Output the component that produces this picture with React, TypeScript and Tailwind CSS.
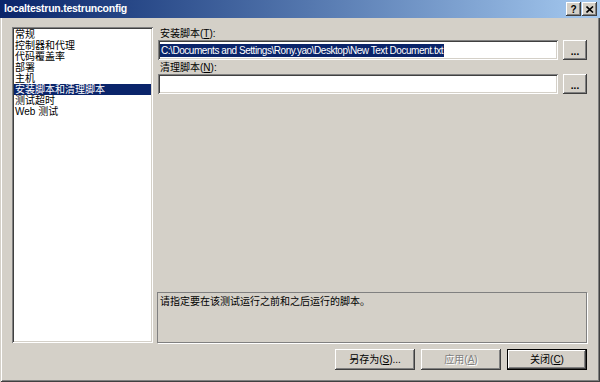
const items = [
  '常规',
  '控制器和代理',
  '代码覆盖率',
  '部署',
  '主机',
  '安装脚本和清理脚本',
  '测试超时',
  'Web 测试',
];

const raised =
  'shadow-[inset_-1px_-1px_0_#404040,inset_1px_1px_0_#ffffff,inset_-2px_-2px_0_#808080,inset_2px_2px_0_#d4d0c8]';
const sunken =
  'shadow-[inset_1px_1px_0_#808080,inset_-1px_-1px_0_#ffffff,inset_2px_2px_0_#404040,inset_-2px_-2px_0_#d4d0c8]';

const Btn = ({
  children,
  disabled,
  primary,
}: {
  children: React.ReactNode;
  disabled?: boolean;
  primary?: boolean;
}) => (
  <div
    className={`flex h-[21px] w-[80px] items-center justify-center bg-[#d4d0c8] text-[10px] leading-none ${
      primary
        ? 'shadow-[inset_0_0_0_1px_#000000,inset_-2px_-2px_0_#404040,inset_2px_2px_0_#ffffff,inset_-3px_-3px_0_#808080]'
        : raised
    } ${disabled ? 'text-[#808080] [text-shadow:1px_1px_0_#ffffff]' : 'text-black'}`}
  >
    {children}
  </div>
);

const App = () => {
  return (
    <div className="flex h-[382px] w-[600px] flex-col overflow-hidden bg-[#d4d0c8] font-['Liberation_Sans','Noto_Sans_CJK_SC',sans-serif] text-[10px] text-black shadow-[inset_1px_0_0_#d4d0c8,inset_-1px_-1px_0_#404040,inset_2px_0_0_#ffffff,inset_-2px_-2px_0_#808080]">
      {/* title bar */}
      <div className="flex h-[18px] items-center bg-gradient-to-r from-[#0a246a] to-[#a6caf0] pl-[4px] pr-[3px]">
        <span className="flex-1 text-[10.5px] font-bold tracking-[-0.25px] text-white">
          localtestrun.testrunconfig
        </span>
        <div className="flex gap-[1px]">
          <div className={`flex h-[14px] w-[15px] items-center justify-center bg-[#d4d0c8] text-[10px] font-bold ${raised}`}>
            ?
          </div>
          <div className={`flex h-[14px] w-[15px] items-center justify-center bg-[#d4d0c8] ${raised}`}>
            <svg width="8" height="7" viewBox="0 0 8 7">
              <path d="M0.5 0.5 L7 6.5 M7 0.5 L0.5 6.5" stroke="#000" strokeWidth="1.6" />
            </svg>
          </div>
        </div>
      </div>

      <div className="flex flex-1 flex-col pl-[12px] pr-[13px] pt-[9px]">
        <div className="flex h-[316px] gap-[4px]">
          {/* list */}
          <div className={`w-[142px] bg-white px-[2px] py-[2px] ${sunken}`}>
            {items.map((t, i) => (
              <div
                key={t}
                className={`h-[11px] pl-[1px] text-[10px] leading-[11px] ${
                  i === 5 ? 'bg-[#0a246a] text-white' : ''
                }`}
              >
                {t}
              </div>
            ))}
          </div>

          {/* right panel */}
          <div className="flex flex-1 flex-col">
            <div className="h-[13px] pl-[3px] pt-[1px] leading-[11px]">
              安装脚本(<u>T</u>):
            </div>
            <div className="flex h-[20px] gap-[5px] pl-[1px]">
              <div className={`flex w-[400px] items-center bg-white pl-[2px] ${sunken}`}>
                <span className="bg-[#0a246a] px-[1px] leading-[13px] tracking-[-0.45px] text-white">
                  C:\Documents and Settings\Rony.yao\Desktop\New Text Document.txt
                </span>
              </div>
              <div className={`flex w-[24px] items-center justify-center bg-[#d4d0c8] pt-[2px] font-bold ${raised}`}>
                ...
              </div>
            </div>
            <div className="h-[14px] pl-[3px] pt-[2px] leading-[11px]">
              清理脚本(<u>N</u>):
            </div>
            <div className="flex h-[20px] gap-[5px] pl-[1px]">
              <div className={`w-[400px] bg-white ${sunken}`} />
              <div className={`flex w-[24px] items-center justify-center bg-[#d4d0c8] pt-[2px] font-bold ${raised}`}>
                ...
              </div>
            </div>
            <div className="flex-1" />
            <div className="h-[51px] border border-[#808080] px-[2px] pt-[3px] leading-[11px] shadow-[1px_1px_0_#ffffff]">
              请指定要在该测试运行之前和之后运行的脚本。
            </div>
          </div>
        </div>

        {/* bottom buttons */}
        <div className="mt-[6px] flex justify-end gap-[6px]">
          <Btn>
            另存为(<u>S</u>)...
          </Btn>
          <Btn disabled>
            应用(<u>A</u>)
          </Btn>
          <Btn primary>
            关闭(<u>C</u>)
          </Btn>
        </div>
      </div>
    </div>
  );
};

export default App;
